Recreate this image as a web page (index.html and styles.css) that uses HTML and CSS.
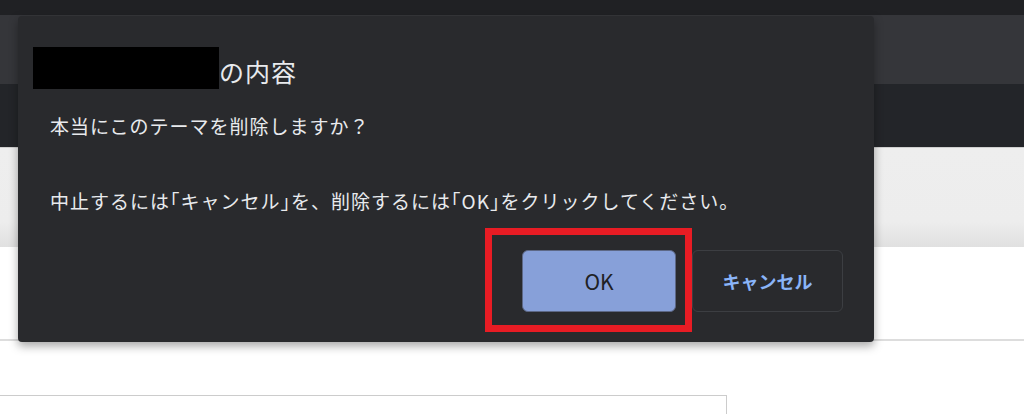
FILE: index.html
```html
<!DOCTYPE html>
<html lang="ja">
<head>
<meta charset="utf-8">
<title>dialog</title>
<link rel="stylesheet" href="styles.css">
</head>
<body>
<div class="page">
  <div class="topbar"></div>
  <div class="tabbar"></div>
  <div class="toolbar"></div>
  <div class="header"></div>
  <div class="content"></div>
  <div class="lower"><div class="box"></div></div>
</div>

<div class="dialog">
  <div class="dlg-title"><span class="redacted"></span><span class="title-text">の内容</span></div>
  <p class="msg msg-first">本当にこのテーマを削除しますか？</p>
  <p class="msg msg-second">中止するには<span class="br">「</span>キャンセル<span class="br">」</span>を、削除するには<span class="br">「</span>OK<span class="br">」</span>をクリックしてください。</p>
  <div class="actions">
    <button class="btn btn-ok">OK</button>
    <button class="btn btn-cancel">キャンセル</button>
  </div>
</div>

<div class="highlight"></div>
</body>
</html>
```

FILE: styles.css
```css
html, body {
  margin: 0;
  padding: 0;
}
body {
  width: 1024px;
  height: 414px;
  overflow: hidden;
  background: #ffffff;
  font-family: "Noto Sans CJK JP", "Noto Sans", sans-serif;
}
.page {
  display: flex;
  flex-direction: column;
  width: 1024px;
  height: 414px;
  overflow: hidden;
}
.page > div {
  flex-shrink: 0;
}
.topbar {
  height: 15px;
  background: #202124;
}
.tabbar {
  height: 69px;
  background: #35363a;
}
.toolbar {
  height: 63px;
  background: #232529;
}
.header {
  height: 99px;
  border-top: 1px solid #cfcfcf;
  background: linear-gradient(#eeeeee 0%, #ededed 75%, #e0e0e0 100%);
}
.content {
  height: 92px;
  background: #ffffff;
  border-bottom: 2px solid #dddddd;
}
.lower {
  height: 74px;
  padding-top: 54px;
  box-sizing: border-box;
  background: #ffffff;
  overflow: hidden;
}
.box {
  width: 726px;
  height: 40px;
  border: 1px solid #cccccc;
  border-left: none;
}

.dialog {
  position: absolute;
  left: 18px;
  top: 16px;
  width: 856px;
  height: 326px;
  box-sizing: border-box;
  background: #292a2d;
  border-radius: 4px;
  box-shadow: 0 4px 10px rgba(0, 0, 0, 0.35);
  padding-bottom: 30px;
  display: flex;
  flex-direction: column;
}
.dlg-title {
  display: flex;
  align-items: center;
  padding: 31px 0 0 15px;
  height: 42px;
}
.redacted {
  display: inline-block;
  width: 186px;
  height: 42px;
  background: #000000;
}
.title-text {
  color: #e8eaed;
  font-size: 25px;
  line-height: 42px;
  padding-top: 6px;
  letter-spacing: 1px;
}
.msg {
  margin: 0;
  padding-left: 32px;
  color: #e8eaed;
  font-size: 19px;
  line-height: 30px;
  letter-spacing: 1px;
}
.msg-first {
  margin-top: 22px;
}
.msg-second {
  margin-top: 45px;
}
.br {
  font-feature-settings: "halt";
}
.actions {
  margin-top: auto;
  display: flex;
  justify-content: flex-end;
  gap: 16px;
  padding-right: 31px;
}
.btn {
  height: 62px;
  box-sizing: border-box;
  border-radius: 6px;
  font-family: "Noto Sans CJK JP", "Noto Sans", sans-serif;
  cursor: pointer;
}
.btn-ok {
  width: 154px;
  background: #87a0d9;
  border: 1px solid #5d6886;
  color: #202124;
  font-size: 21px;
}
.btn-cancel {
  width: 151px;
  background: transparent;
  border: 1px solid #3c3e42;
  color: #8ab4f8;
  font-size: 18px;
  font-weight: bold;
}

.highlight {
  position: absolute;
  left: 485px;
  top: 228px;
  width: 207px;
  height: 104px;
  box-sizing: border-box;
  border: 7px solid #e81c24;
}
```
